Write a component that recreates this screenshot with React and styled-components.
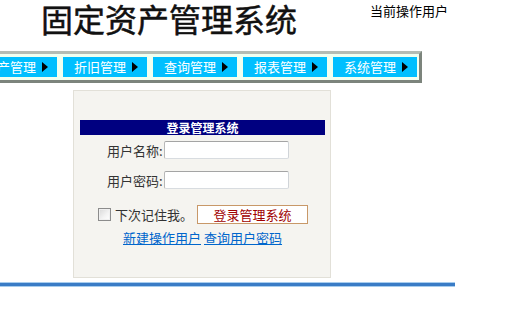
import React from 'react';
import styled, { createGlobalStyle } from 'styled-components';

const GlobalStyle = createGlobalStyle`
  html, body {
    margin: 0;
    padding: 0;
    background: #ffffff;
    overflow: hidden;
  }
  body {
    font-family: "Noto Sans CJK SC", "Liberation Sans", sans-serif;
    color: #333;
  }
`;

const Page = styled.div`
  width: 505px;
  height: 313px;
  overflow: hidden;
`;

const Header = styled.div`
  display: flex;
  align-items: flex-start;
  height: 51px;
`;

const Title = styled.h1`
  margin: 0 0 0 41px;
  font-size: 32px;
  line-height: 36px;
  font-weight: 400;
  -webkit-text-stroke: 0.5px #111;
  color: #111;
  font-family: "Noto Sans CJK SC", serif;
`;

const UserInfo = styled.div`
  margin-left: auto;
  margin-right: 57px;
  margin-top: 2px;
  font-size: 13px;
  line-height: 17px;
  color: #000;
`;

const NavBar = styled.div`
  display: flex;
  gap: 6px;
  width: max-content;
  margin-left: -32px;
  padding: 3px 2px;
  background: #f0fff0;
  border: 3px solid;
  border-color: #b4bcb4 #7c847c #7c847c #b4bcb4;
`;

const NavButton = styled.div`
  display: flex;
  align-items: center;
  gap: 6px;
  width: 84px;
  height: 20px;
  box-sizing: border-box;
  padding-left: 11px;
  background: #00bfff;
  color: #fff;
  font-size: 13px;
  line-height: 20px;
`;

const Arrow = styled.span`
  width: 0;
  height: 0;
  border-left: 6px solid #000;
  border-top: 5px solid transparent;
  border-bottom: 5px solid transparent;
`;

const Panel = styled.div`
  margin: 7px 0 0 73px;
  width: 258px;
  height: 188px;
  box-sizing: border-box;
  background: #f5f4f0;
  border: 1px solid #e2e0d8;
  padding: 29px 5px 0 6px;
`;

const PanelTitle = styled.div`
  height: 15px;
  background: #000080;
  color: #fff;
  font-size: 12px;
  font-weight: 700;
  line-height: 15px;
  text-align: center;
`;

const FieldRow = styled.div`
  display: flex;
  align-items: center;
  margin: ${p => p.$top}px 0 0 27px;
  height: 18px;
`;

const Label = styled.label`
  font-size: 13px;
  color: #333;
  width: 57px;
  white-space: nowrap;
`;

const TextInput = styled.input`
  width: 125px;
  height: 18px;
  box-sizing: border-box;
  border: 1px solid;
  border-color: #a4a4a4 #d0d4d8 #d8dce0 #b8b8b8;
  border-radius: 2px;
  background: #fff;
  padding: 0 2px;
  outline: none;
`;

const ActionRow = styled.div`
  display: flex;
  align-items: center;
  margin: 16px 0 0 18px;
  height: 19px;
`;

const CheckBox = styled.span`
  width: 13px;
  height: 13px;
  box-sizing: border-box;
  border: 1px solid #8c8c8c;
  background: linear-gradient(135deg, #d8d8d8 0%, #f4f4f4 60%, #ffffff 100%);
  box-shadow: inset 0 0 0 1px #f0f0f0;
`;

const CheckText = styled.span`
  font-size: 13px;
  color: #333;
  margin-left: 4px;
`;

const LoginButton = styled.button`
  margin-left: 4px;
  width: 111px;
  height: 19px;
  box-sizing: border-box;
  border: 1px solid #c89868;
  background: #fff;
  color: #a00000;
  font-family: "Noto Sans CJK SC", sans-serif;
  font-size: 13px;
  line-height: 17px;
  padding: 0;
`;

const Links = styled.div`
  display: flex;
  gap: 3px;
  margin: 6px 0 0 43px;
`;

const Link = styled.a`
  font-size: 13px;
  line-height: 15px;
  color: #0066cc;
  text-decoration: underline;
  cursor: pointer;
`;

const BottomLine = styled.div`
  margin-top: 4px;
  width: 455px;
  height: 3px;
  background: #3a7cc6;
  border-top: 1px solid #a8cdee;
  border-bottom: 1px solid #a8cdee;
`;

const navItems = ['资产管理', '折旧管理', '查询管理', '报表管理', '系统管理'];

export default function App() {
  return (
    <Page>
      <GlobalStyle />
      <Header>
        <Title>固定资产管理系统</Title>
        <UserInfo>当前操作用户</UserInfo>
      </Header>
      <NavBar>
        {navItems.map(item => (
          <NavButton key={item}>
            {item}
            <Arrow />
          </NavButton>
        ))}
      </NavBar>
      <Panel>
        <PanelTitle>登录管理系统</PanelTitle>
        <FieldRow $top={6}>
          <Label>用户名称:</Label>
          <TextInput type="text" />
        </FieldRow>
        <FieldRow $top={12}>
          <Label>用户密码:</Label>
          <TextInput type="password" />
        </FieldRow>
        <ActionRow>
          <CheckBox />
          <CheckText>下次记住我。</CheckText>
          <LoginButton>登录管理系统</LoginButton>
        </ActionRow>
        <Links>
          <Link>新建操作用户</Link>
          <Link>查询用户密码</Link>
        </Links>
      </Panel>
      <BottomLine />
    </Page>
  );
}
